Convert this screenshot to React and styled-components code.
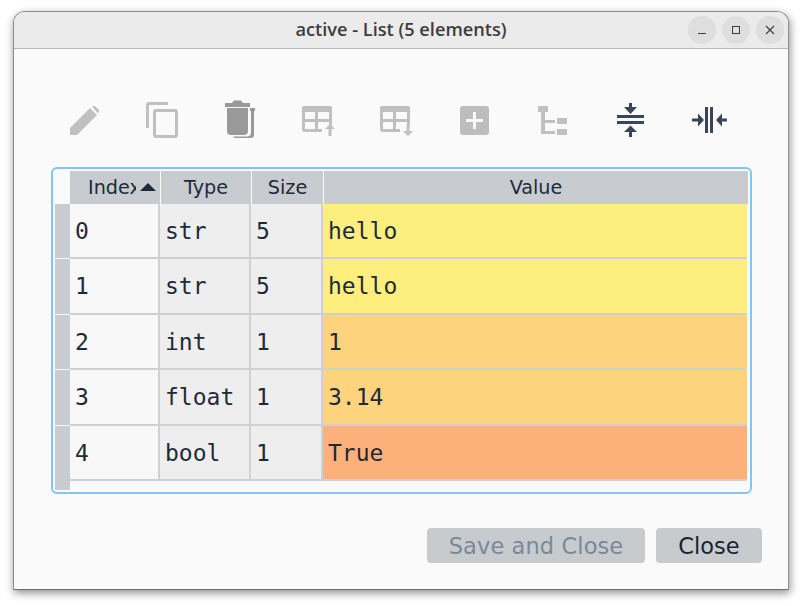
import React from 'react';
import styled, {createGlobalStyle} from 'styled-components';

const GlobalStyle = createGlobalStyle`
  html, body {
    margin: 0;
    padding: 0;
    background: #fff;
    font-family: "DejaVu Sans", sans-serif;
  }
`;

const Page = styled.div`
  width: 802px;
  height: 606px;
  padding: 11px 13px 0 13px;
  box-sizing: border-box;
`;

const Window = styled.div`
  width: 776px;
  height: 579px;
  box-sizing: border-box;
  display: flex;
  flex-direction: column;
  background: #fafafa;
  border: 1px solid #8c8c8c;
  border-bottom-color: #6e6e6e;
  border-radius: 12px 12px 0 0;
  box-shadow: 1px 3px 9px rgba(0, 0, 0, 0.45);
`;

const TitleBar = styled.div`
  height: 37px;
  flex: none;
  box-sizing: border-box;
  padding-bottom: 2px;
  position: relative;
  display: flex;
  align-items: center;
  justify-content: center;
  background: #ebebeb;
  border-bottom: 1px solid #b9b9b9;
  border-radius: 11px 11px 0 0;
`;

const TitleText = styled.div`
  font-family: "Open Sans", sans-serif;
  font-weight: 600;
  font-size: 18.2px;
  color: #3d3d3d;
`;

const WindowButtons = styled.div`
  position: absolute;
  right: 4px;
  top: 4px;
  display: flex;
  gap: 6px;
`;

const RoundButton = styled.div`
  width: 28px;
  height: 28px;
  border-radius: 50%;
  background: #dedede;
  display: flex;
  align-items: center;
  justify-content: center;
`;

const Toolbar = styled.div`
  display: flex;
  margin: 51px 0 0 32px;
`;

const ToolButton = styled.div`
  width: 78px;
  height: 40px;
  display: flex;
  justify-content: center;
`;

const TableFrame = styled.div`
  margin: 27px 0 0 37px;
  width: 701px;
  height: 327px;
  box-sizing: border-box;
  padding: 2px;
  border: 2px solid #7fc6f7;
  border-radius: 6px;
  display: flex;
  flex-direction: column;
`;

const Row = styled.div`
  display: flex;
  height: ${p => p.$height}px;
  flex: none;
`;

const HeaderCorner = styled.div`
  width: 15px;
  flex: none;
`;

const HeaderCell = styled.div`
  width: ${p => p.$width}px;
  margin-right: ${p => p.$gap}px;
  flex: none;
  box-sizing: border-box;
  background: #c8ccd0;
  color: #1f2a38;
  font-size: 19.2px;
  line-height: 33px;
  text-align: center;
  display: flex;
  justify-content: center;
`;

const ClippedLabel = styled.div`
  width: 48px;
  overflow: hidden;
  white-space: nowrap;
  text-align: left;
  margin-left: 18px;
`;

const SortArrow = styled.div`
  width: 0;
  height: 0;
  margin: 12px 4px 0 4px;
  border-left: 8px solid transparent;
  border-right: 8px solid transparent;
  border-bottom: 8px solid #1f2a38;
`;

const RowHead = styled.div`
  width: 15px;
  flex: none;
  background: #c8ccd0;
  border-bottom: ${p => (p.$open ? 0 : 1)}px solid #fafafa;
  box-sizing: border-box;
`;

const Cell = styled.div`
  width: ${p => p.$width}px;
  flex: none;
  box-sizing: border-box;
  padding-left: 5px;
  background: ${p => p.$bg};
  border-right: ${p => (p.$last ? 0 : 2)}px solid #d0d0d0;
  border-bottom: 2px solid #d0d0d0;
  display: flex;
  align-items: center;
  font-family: "DejaVu Sans Mono", monospace;
  font-size: 23px;
  color: #1f2a38;
`;

const Footer = styled.div`
  margin: 34px 26px 0 0;
  display: flex;
  justify-content: flex-end;
  gap: 11px;
`;

const Button = styled.div`
  height: 35px;
  width: ${p => p.$width}px;
  box-sizing: border-box;
  border-radius: 4px;
  background: #c8cbce;
  color: ${p => (p.$disabled ? '#78899a' : '#1a2330')};
  font-size: 22.5px;
  letter-spacing: ${p => (p.$disabled ? 0.1 : 0)}px;
  display: flex;
  align-items: center;
  justify-content: center;
`;

const COLUMNS = [90, 91, 72, 424];
const GREY = '#c0c0c0';
const DARK_GREY = '#999';
const SLATE = '#3a4557';

const Icon = ({cx, children}) => (
    <svg width="40" height="40" viewBox={`${cx - 20} 100 40 40`}>{children}</svg>
);

const TableIcon = ({cx, down}) => {
    const x = cx - 17;
    return (
        <Icon cx={cx}>
            <path d={`M${x + 20} 130.5H${x + 3}a1.5 1.5 0 0 1-1.5-1.5V109a1.5 1.5 0 0 1 1.5-1.5H${x + 27}a1.5 1.5 0 0 1 1.5 1.5V126`}
                  fill="none" stroke={GREY} strokeWidth="3"/>
            <rect x={x} y="106" width="30" height="6" rx="2" fill={GREY}/>
            <rect x={x} y="119" width="30" height="3" fill={GREY}/>
            <rect x={x + 13} y="108" width="3" height="22" fill={GREY}/>
            {down
                ? <path d={`M${x + 26.5} 124h3v7h3.5l-5 5-5-5h3.5z`} fill={GREY}/>
                : <path d={`M${x + 26.5} 136h3v-7h3.5l-5-5-5 5h3.5z`} fill={GREY}/>}
        </Icon>
    );
};

const TOOLS = [
    <Icon cx={85} key="edit">
        <path d="M70 128v7h7l20-20-7-7zM92 106.5l3-.5 4 4v2l-1 1.5z" fill={GREY}/>
    </Icon>,
    <Icon cx={163} key="copy">
        <path d="M168 103.5h-19a1.5 1.5 0 0 0-1.5 1.5V128" fill="none" stroke={GREY} strokeWidth="3"/>
        <rect x="154.5" y="110.5" width="22" height="26" rx="1.5" fill="none" stroke={GREY} strokeWidth="3"/>
    </Icon>,
    <Icon cx={241} key="delete">
        <path d="M232 103l2-2.5h7l2 2.5h7v4h-25v-4z" fill={DARK_GREY}/>
        <path d="M227 108h21v23a4 4 0 0 1-4 4h-13a4 4 0 0 1-4-4z" fill={DARK_GREY}/>
        <path d="M250 108h5v3h-1v24a3 3 0 0 1-3 3h-15a3 3 0 0 1-3-1.5h14a4 4 0 0 0 4-4V111h-1z" fill={DARK_GREY}/>
    </Icon>,
    <TableIcon cx={319} key="row-up"/>,
    <TableIcon cx={397} down key="row-down"/>,
    <Icon cx={475} key="add">
        <rect x="460" y="106" width="29" height="29" rx="3" fill="#bdbdbd"/>
        <path d="M473 112h3v7h7v3h-7v7h-3v-7h-7v-3h7z" fill="#fafafa"/>
    </Icon>,
    <Icon cx={553} key="tree">
        <rect x="538" y="106" width="10" height="6" fill={GREY}/>
        <path d="M541 112h4v8h10v3h-10v8h10v3h-14z" fill={GREY}/>
        <rect x="557" y="118" width="10" height="6" fill={GREY}/>
        <rect x="557" y="129" width="10" height="6" fill={GREY}/>
    </Icon>,
    <Icon cx={631} key="collapse-rows">
        <path d="M629 103h3v4h5l-6.5 7-6.5-7h5z" fill={SLATE}/>
        <rect x="617" y="115" width="27" height="3" fill={SLATE}/>
        <rect x="617" y="121" width="27" height="3" fill={SLATE}/>
        <path d="M629 137h3v-5h5l-6.5-6.5-6.500 6.500h5z" fill={SLATE}/>
    </Icon>,
    <Icon cx={709} key="collapse-columns">
        <rect x="705" y="107" width="3" height="26" fill={SLATE}/>
        <rect x="710" y="107" width="3" height="26" fill={SLATE}/>
        <path d="M692 118.5h6v-5l6 6.500-6 6.500v-5h-6z" fill={SLATE}/>
        <path d="M727 118.5h-5v-5l-6 6.500 6 6.500v-5h5z" fill={SLATE}/>
    </Icon>,
];

const ROWS = [
    {index: 0, type: 'str', size: 5, value: 'hello', color: '#fdee7e', height: 55},
    {index: 1, type: 'str', size: 5, value: 'hello', color: '#fdee7e', height: 56},
    {index: 2, type: 'int', size: 1, value: '1', color: '#fdd37d', height: 55},
    {index: 3, type: 'float', size: 1, value: '3.14', color: '#fdd37d', height: 56},
    {index: 4, type: 'bool', size: 1, value: 'True', color: '#feb07a', height: 55},
];

const App = () => {
    return (
        <Page>
            <GlobalStyle/>
            <Window>
                <TitleBar>
                    <TitleText>active - List (5 elements)</TitleText>
                    <WindowButtons>
                        <RoundButton>
                            <svg width="10" height="10" viewBox="0 0 10 10">
                                <rect x="1" y="8" width="8" height="1" fill="#3d3d3d"/>
                            </svg>
                        </RoundButton>
                        <RoundButton>
                            <svg width="10" height="10" viewBox="0 0 10 10">
                                <rect x="1.5" y="1.5" width="7" height="7" fill="none" stroke="#3d3d3d"/>
                            </svg>
                        </RoundButton>
                        <RoundButton>
                            <svg width="10" height="10" viewBox="0 0 10 10">
                                <path d="M1 1l8 8M9 1l-8 8" stroke="#3d3d3d" strokeWidth="1.1"/>
                            </svg>
                        </RoundButton>
                    </WindowButtons>
                </TitleBar>
                <Toolbar>
                    {TOOLS.map(tool => <ToolButton key={tool.key}>{tool}</ToolButton>)}
                </Toolbar>
                <TableFrame>
                    <Row $height={33}>
                        <HeaderCorner/>
                        <HeaderCell $width={90} $gap={1}>
                            <ClippedLabel>Index</ClippedLabel>
                            <SortArrow/>
                        </HeaderCell>
                        <HeaderCell $width={90} $gap={1}>Type</HeaderCell>
                        <HeaderCell $width={71} $gap={1}>Size</HeaderCell>
                        <HeaderCell $width={424} $gap={0}>Value</HeaderCell>
                    </Row>
                    {ROWS.map((row, i) => (
                        <Row $height={row.height} key={row.index}>
                            <RowHead $open={i === ROWS.length - 1}/>
                            <Cell $width={COLUMNS[0]} $bg="#f8f8f8">{row.index}</Cell>
                            <Cell $width={COLUMNS[1]} $bg="#eeeeee">{row.type}</Cell>
                            <Cell $width={COLUMNS[2]} $bg="#eeeeee">{row.size}</Cell>
                            <Cell $width={COLUMNS[3]} $bg={row.color} $last>{row.value}</Cell>
                        </Row>
                    ))}
                    <Row $height={9}>
                        <RowHead $open/>
                    </Row>
                </TableFrame>
                <Footer>
                    <Button $width={218} $disabled>Save and Close</Button>
                    <Button $width={106}>Close</Button>
                </Footer>
            </Window>
        </Page>
    );
};

export default App;
